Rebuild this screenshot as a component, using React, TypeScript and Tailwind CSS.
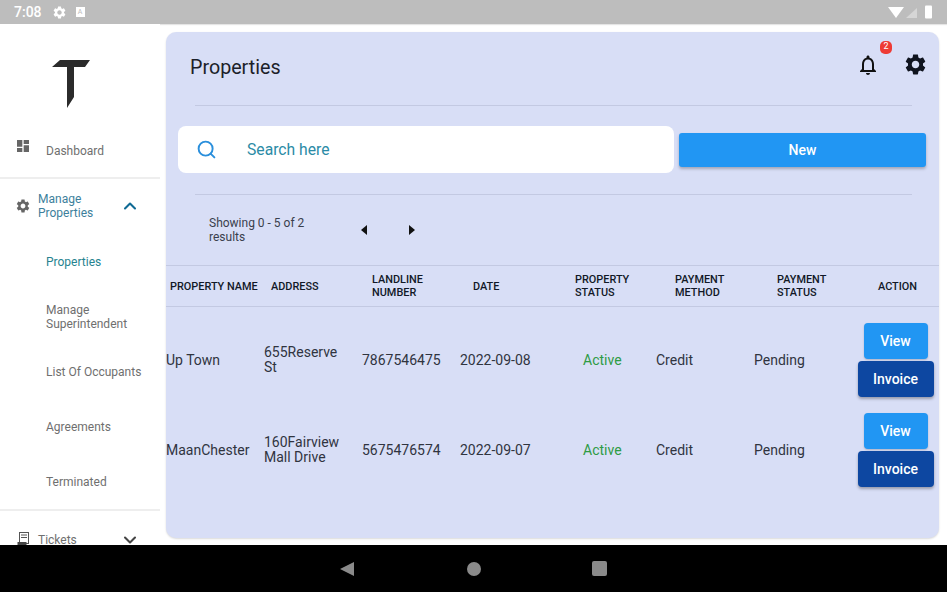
import { ChevronDown, ChevronUp, Search } from "lucide-react";

const font = "font-['Roboto','Liberation_Sans',sans-serif]";

const subItems = [
  { label: "Properties", className: "text-[#26838f]" },
  { label: "Manage Superintendent", className: "text-[#6f6f6f]" },
  { label: "List Of Occupants", className: "text-[#6f6f6f]" },
  { label: "Agreements", className: "text-[#6f6f6f]" },
  { label: "Terminated", className: "text-[#6f6f6f]" },
];

const headers = ["PROPERTY NAME", "ADDRESS", "LANDLINE NUMBER", "DATE", "PROPERTY STATUS", "PAYMENT METHOD", "PAYMENT STATUS", "ACTION"];

const rows = [
  { name: "Up Town", address: "655Reserve St", phone: "7867546475", date: "2022-09-08" },
  { name: "MaanChester", address: "160Fairview Mall Drive", phone: "5675476574", date: "2022-09-07" },
];

function Gear({ size, className }: { size: number; className?: string }) {
  return (
    <svg width={size} height={size} viewBox="0 0 24 24" fill="currentColor" className={className}>
      <path d="M19.14 12.94c.04-.3.06-.61.06-.94 0-.32-.02-.64-.07-.94l2.03-1.58c.18-.14.23-.41.12-.61l-1.92-3.32c-.12-.22-.37-.29-.59-.22l-2.39.96c-.5-.38-1.03-.7-1.62-.94l-.36-2.54c-.04-.24-.24-.41-.48-.41h-3.84c-.24 0-.43.17-.47.41l-.36 2.54c-.59.24-1.13.57-1.62.94l-2.39-.96c-.22-.08-.47 0-.59.22L2.74 8.87c-.12.21-.08.47.12.61l2.03 1.58c-.05.3-.09.63-.09.94s.02.64.07.94l-2.03 1.58c-.18.14-.23.41-.12.61l1.92 3.32c.12.22.37.29.59.22l2.39-.96c.5.38 1.03.7 1.62.94l.36 2.54c.05.24.24.41.48.41h3.84c.24 0 .44-.17.47-.41l.36-2.54c.59-.24 1.13-.56 1.62-.94l2.39.96c.22.08.47 0 .59-.22l1.92-3.32c.12-.22.07-.47-.12-.61l-2.01-1.58zM12 15.6c-1.98 0-3.6-1.62-3.6-3.6s1.62-3.6 3.6-3.6 3.6 1.62 3.6 3.6-1.62 3.6-3.6 3.6z" />
    </svg>
  );
}

function Sidebar() {
  return (
    <aside className="w-[160px] shrink-0 overflow-hidden bg-white">
      <div className="flex h-[84px] items-end justify-center pr-[18px]">
        <svg width="38" height="48" viewBox="0 0 38 48">
          <path d="M8 0H38L33 7H22V37L15 48V7H0Z" fill="#2b2b2b" />
        </svg>
      </div>
      <div className="flex h-[71px] items-start border-b-2 border-[#eeeeee] pl-[15px] pt-[30px]">
        <svg width="16" height="16" viewBox="0 0 24 24" fill="#666666">
          <path d="M3 13h8V3H3v10zm0 8h8v-6H3v6zm10 0h8V11h-8v10zm0-18v6h8V3h-8z" />
        </svg>
        <span className="ml-[15px] mt-[4px] text-[12px] text-[#6f6f6f]">Dashboard</span>
      </div>
      <div className="flex h-[55px] items-center pb-[2px] pl-[15px] pr-[20px]">
        <Gear size={16} className="text-[#666666]" />
        <span className="ml-[7px] w-[66px] text-[12px] leading-[14px] text-[#3d7f9c]">Manage Properties</span>
        <ChevronUp size={20} strokeWidth={2.5} className="ml-auto text-[#0f6a94]" />
      </div>
      <div className="border-b-2 border-[#eeeeee]">
        {subItems.map((item) => (
          <div key={item.label} className={`flex h-[55px] items-center pl-[46px] pr-2 text-[12px] leading-[14px] ${item.className}`}>
            {item.label}
          </div>
        ))}
      </div>
      <div className="flex items-center pl-[17px] pr-[20px] pt-[19px]">
        <svg width="13" height="16" viewBox="0 0 13 16" fill="none">
          <rect x="2.5" y="0.5" width="9" height="11" stroke="#555555" />
          <path d="M4 3H10M4 5.5H10" stroke="#555555" />
          <rect x="0.5" y="10" width="9" height="6" fill="#444444" />
        </svg>
        <span className="ml-[8px] text-[12px] text-[#6f6f6f]">Tickets</span>
        <ChevronDown size={20} strokeWidth={2.5} className="ml-auto text-[#444444]" />
      </div>
    </aside>
  );
}

function Toolbar() {
  return (
    <>
      <div className="flex h-[73px] items-center pl-[24px] pr-[11px]">
        <h1 className="mb-[1px] text-[19.7px] text-[#1c1f2a]">Properties</h1>
        <div className="relative ml-auto mr-[23px] mt-[-8px]">
          <svg width="24" height="24" viewBox="0 0 24 24" fill="#111111">
            <path d="M12 22c1.1 0 2-.9 2-2h-4c0 1.1.9 2 2 2zm6-6v-5c0-3.07-1.63-5.64-4.5-6.32V4c0-.83-.67-1.5-1.5-1.5s-1.5.67-1.5 1.5v.68C7.64 5.36 6 7.92 6 11v5l-2 2v1h16v-1l-2-2zm-2 1H8v-6c0-2.48 1.51-4.5 4-4.5s4 2.02 4 4.5v6z" />
          </svg>
          <span className="absolute left-[24px] top-[-12px] flex h-[13px] w-[12px] items-center justify-center rounded-[5px] bg-[#ee3b35] text-[9px] text-white">2</span>
        </div>
        <Gear size={25} className="mt-[-8px] text-[#10141f]" />
      </div>
      <div className="ml-[29px] mr-[27px] border-t border-[#c3c9e2]" />
      <div className="mt-[20px] flex gap-[5px] px-[12px]">
        <div className="flex h-[47px] w-[496px] items-center rounded-[8px] bg-white pl-[18px]">
          <Search size={21} strokeWidth={2.2} className="text-[#2a8fdc]" />
          <span className="ml-[30px] mt-[1px] text-[15.7px] text-[#2b8ba6]">Search here</span>
        </div>
        <button className="mt-[7px] h-[34px] w-[247px] self-start rounded-[3px] bg-[#2196f3] text-[14px] font-medium text-white shadow-[0_2px_3px_rgba(0,0,0,0.25)]">New</button>
      </div>
      <div className="ml-[29px] mr-[27px] mt-[21px] border-t border-[#c3c9e2]" />
      <div className="flex h-[70px] items-center pl-[43px]">
        <span className="w-[110px] text-[12px] leading-[14px] text-[#3a3f4d]">Showing 0 - 5 of 2 results</span>
        <svg width="6" height="10" viewBox="0 0 6 10" className="ml-[42px]"><path d="M6 0V10L0 5Z" fill="#111111" /></svg>
        <svg width="6" height="10" viewBox="0 0 6 10" className="ml-[42px]"><path d="M0 0V10L6 5Z" fill="#111111" /></svg>
      </div>
    </>
  );
}

function Table() {
  return (
    <>
      <div className="grid h-[42px] grid-cols-[101px_101px_101px_102px_100px_102px_101px_1fr] items-center border-y border-[#c3c9e2] pl-[4px] text-[10.9px] font-medium leading-[13px] text-[#111827]">
        {headers.map((h) => (
          <div key={h} className={h === "ACTION" ? "" : "pr-[12px]"}>{h}</div>
        ))}
      </div>
      <div className="mt-[8px]">
        {rows.map((row) => (
          <div key={row.name} className="grid h-[90px] grid-cols-[98px_98px_98px_98px_98px_98px_98px_1fr] items-center text-[14px] leading-[15px] text-[#30343f]">
            <div>{row.name}</div>
            <div className="pr-[20px]">{row.address}</div>
            <div>{row.phone}</div>
            <div>{row.date}</div>
            <div className="pl-[25px] text-[#2e9b45]">Active</div>
            <div>Credit</div>
            <div>Pending</div>
            <div className="flex flex-col items-center">
              <button className="h-[36px] w-[64px] rounded-[4px] bg-[#2196f3] text-[14px] font-medium text-white shadow-[0_1px_2px_rgba(0,0,0,0.2)]">View</button>
              <button className="mt-[2px] h-[36px] w-[76px] rounded-[4px] bg-[#0d47a1] text-[14px] font-medium text-white shadow-[0_2px_3px_rgba(0,0,0,0.3)]">Invoice</button>
            </div>
          </div>
        ))}
      </div>
    </>
  );
}

export default function App() {
  return (
    <div className={`flex h-[592px] w-[947px] flex-col overflow-hidden bg-white ${font}`}>
      <div className="flex h-[24px] shrink-0 items-center bg-[#bdbdbd] px-[14px] text-white shadow-[0_1px_1px_rgba(0,0,0,0.1)]">
        <span className="text-[14px] font-medium">7:08</span>
        <Gear size={15} className="ml-[10px] text-white" />
        <span className="ml-[9px] flex h-[10px] w-[9px] items-center justify-center bg-white text-[7px] text-[#bdbdbd]">A</span>
        <svg width="45" height="14" viewBox="0 0 45 14" className="ml-auto">
          <path d="M0 2H16L8 13Z" fill="white" />
          <path d="M18 13L29 3V13Z" fill="#d6d6d6" />
          <rect x="37" y="0.5" width="7" height="13" rx="1" fill="white" />
        </svg>
      </div>
      <div className="flex h-[521px] shrink-0">
        <Sidebar />
        <div className="min-w-0 flex-1 pb-[7px] pl-[6px] pr-[8px] pt-[8px]">
          <main className="h-full overflow-hidden rounded-[10px] bg-[#d8def6] shadow-[0_1px_2px_rgba(0,0,0,0.15)]">
            <Toolbar />
            <Table />
          </main>
        </div>
      </div>
      <div className="flex h-[47px] shrink-0 items-center bg-black pl-[339px]">
        <svg width="16" height="16" viewBox="0 0 16 16"><path d="M15 1V15L1 8Z" fill="#8a8a8a" /></svg>
        <span className="ml-[112px] h-[14px] w-[14px] rounded-full bg-[#8a8a8a]" />
        <span className="ml-[111px] h-[15px] w-[15px] rounded-[2px] bg-[#8a8a8a]" />
      </div>
    </div>
  );
}
